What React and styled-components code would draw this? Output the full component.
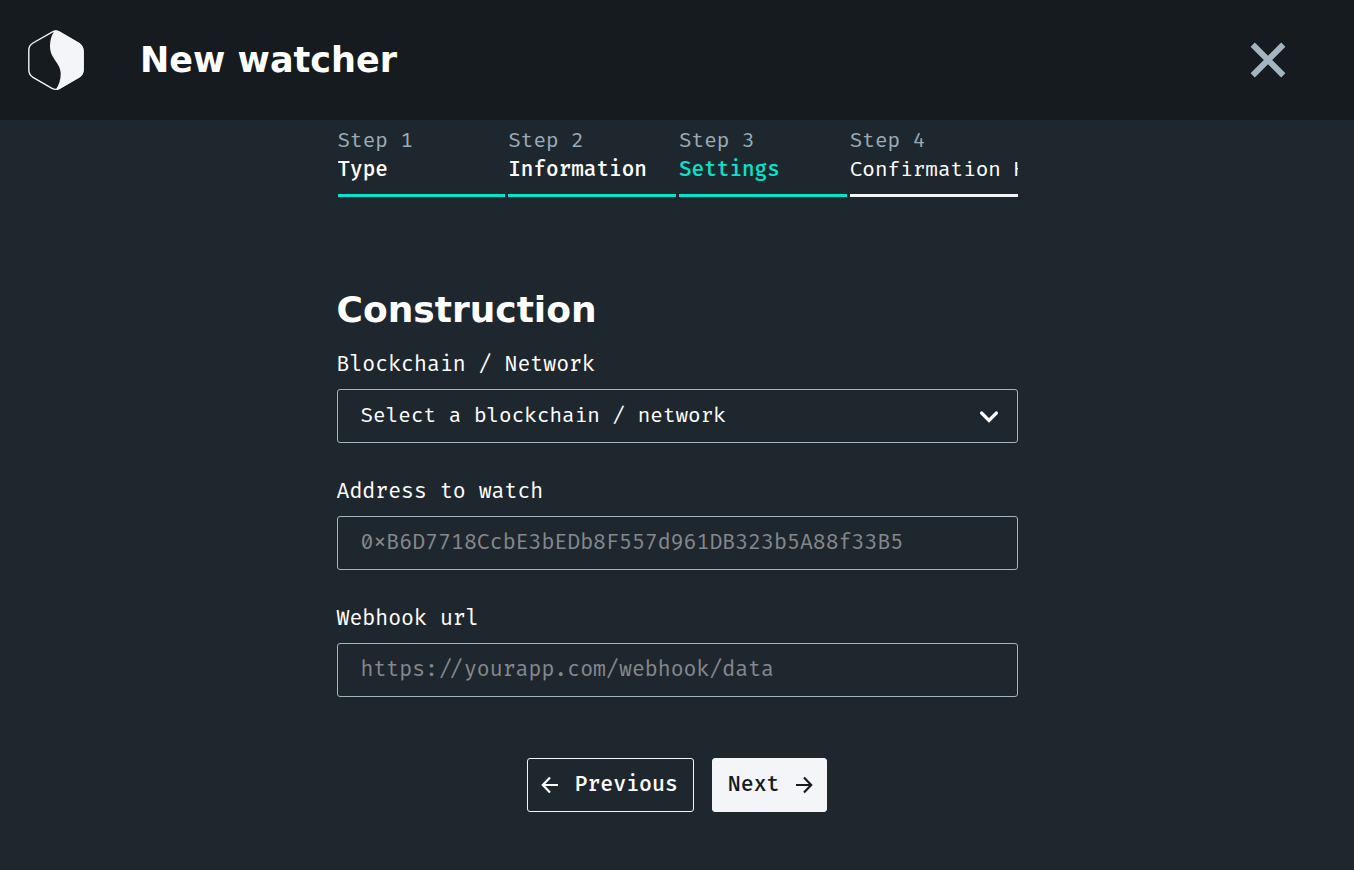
import React from "react";
import styled, { createGlobalStyle } from "styled-components";

const code = `"Fira Code", "Fira Mono", "Liberation Mono", monospace`;
const mono = `"Fira Mono", "Liberation Mono", monospace`;
const display = `"DejaVu Sans", sans-serif`;

const GlobalStyle = createGlobalStyle`
  *, *::before, *::after { box-sizing: border-box; }
  body {
    margin: 0;
    min-height: 100vh;
    background: #1f272e;
    color: #ffffff;
    font-family: ${code};
    font-size: 21px;
    line-height: 29px;
  }
`;

const Header = styled.header`
  display: flex;
  align-items: center;
  height: 120px;
  padding: 0 64px 0 24px;
  background: #151b1e;
`;

const Logo = styled.a`
  display: flex;
  margin-right: 52px;
`;

const Title = styled.h1`
  flex: 1;
  margin: 0;
  font-family: ${display};
  font-size: 35px;
  font-weight: 700;
  line-height: 44px;
`;

const CloseButton = styled.button`
  display: flex;
  padding: 0;
  border: 0;
  background: none;
  color: #a3b5c0;
  cursor: pointer;
`;

const Main = styled.main`
  width: 100%;
  max-width: 681px;
  margin: 0 auto;
  padding-bottom: 56px;
`;

const Steps = styled.ol`
  display: grid;
  grid-template-columns: repeat(4, minmax(0, 1fr));
  gap: 3px;
  margin: 0;
  padding: 6px 0 0 1px;
  list-style: none;
  font-family: ${mono};
`;

const Step = styled.li`
  overflow: hidden;
  padding-bottom: 10px;
  border-bottom: 3px solid ${(p) => (p.$reached ? "#00e5cc" : "#f4f5f8")};
  white-space: nowrap;
`;

const StepNumber = styled.div`
  color: #9aabb8;
`;

const StepName = styled.div`
  color: ${(p) => (p.$current ? "#00e5cc" : "#ffffff")};
  font-weight: ${(p) => (p.$reached ? 500 : 400)};
`;

const SectionTitle = styled.h2`
  margin: 91px 0 18px;
  font-family: ${display};
  font-size: 36px;
  font-weight: 700;
  line-height: 44px;
`;

const Field = styled.div`
  display: flex;
  flex-direction: column;
  gap: 10px;
  margin-bottom: 34px;
`;

const Label = styled.label`
  line-height: 29px;
`;

const SelectWrap = styled.div`
  display: grid;
  align-items: center;

  & > * {
    grid-area: 1 / 1;
  }

  svg {
    justify-self: end;
    margin-right: 19px;
    pointer-events: none;
  }
`;

const controlStyle = `
  width: 100%;
  height: 54px;
  padding: 0 23px 2px;
  border: 1px solid #a3b5c0;
  border-radius: 3px;
  background: transparent;
  color: #ffffff;
  font: inherit;
`;

const Select = styled.select`
  ${controlStyle}
  font-family: ${mono};
  appearance: none;
`;

const Input = styled.input`
  ${controlStyle}
  &::placeholder {
    color: #85888d;
    opacity: 1;
  }
`;

const Actions = styled.div`
  display: flex;
  justify-content: center;
  gap: 18px;
  margin-top: 61px;
`;

const Button = styled.button`
  display: flex;
  align-items: center;
  gap: 14px;
  height: 54px;
  padding: ${(p) => (p.$primary ? "0 12px 2px 15px" : "0 15px 2px 12px")};
  border: 1px solid #f4f5f8;
  border-radius: 3px;
  background: ${(p) => (p.$primary ? "#f4f5f8" : "transparent")};
  color: ${(p) => (p.$primary ? "#151b1e" : "#ffffff")};
  font: inherit;
  font-weight: 500;
  cursor: pointer;
`;

const steps = ["Type", "Information", "Settings", "Confirmation H"];
const current = 2;

function LogoMark() {
  return (
    <svg width="64" height="64" viewBox="0 0 64 64" aria-hidden="true">
      <path
        d="M28.5 3.9 Q31.7 2 35 3.9 L55 15.5 Q59.2 18.3 59.2 23.5 V42 Q59.2 46.5 55 49 L35.5 60.3 Q31.7 62.4 28 60.3 L9 49.3 Q4.8 46.7 4.8 42 V22 Q4.8 17.5 9 15 Z"
        fill="none"
        stroke="#f4f5f8"
        strokeWidth="1.4"
      />
      <path
        d="M31 2.4 Q33.5 2.2 36 3.8 L55.5 15 Q59.4 18 59.4 23 V42 Q59.4 46.5 55.5 49.5 L36 60.8 Q34 62 31.7 62 C35 57 37 51 36.7 45 C36 34 26 31 26 18 C26 12 27.5 6.5 31 2.4 Z"
        fill="#f4f5f8"
      />
    </svg>
  );
}

function Arrow({ left }) {
  return (
    <svg width="20" height="20" viewBox="0 0 20 20" fill="none" stroke="currentColor" strokeWidth="2.2" aria-hidden="true">
      <path d={left ? "M18 11 H3 M10 3.5 L2.8 11 L10 18.5" : "M2 11 H17 M10 3.5 L17.2 11 L10 18.5"} />
    </svg>
  );
}

export default function App() {
  return (
    <>
      <GlobalStyle />
      <Header>
        <Logo href="#" aria-label="Home">
          <LogoMark />
        </Logo>
        <Title>New watcher</Title>
        <CloseButton type="button" aria-label="Close">
          <svg width="44" height="44" viewBox="0 0 44 44" stroke="currentColor" strokeWidth="6" aria-hidden="true">
            <path d="M6.7 6.7 L37.3 37.3 M37.3 6.7 L6.7 37.3" />
          </svg>
        </CloseButton>
      </Header>
      <Main>
        <Steps>
          {steps.map((name, i) => (
            <Step key={name} $reached={i <= current} aria-current={i === current ? "step" : undefined}>
              <StepNumber>Step {i + 1}</StepNumber>
              <StepName $reached={i <= current} $current={i === current}>
                {name}
              </StepName>
            </Step>
          ))}
        </Steps>
        <form onSubmit={(e) => e.preventDefault()}>
          <SectionTitle>Construction</SectionTitle>
          <Field>
            <Label htmlFor="network">Blockchain / Network</Label>
            <SelectWrap>
              <Select id="network">
                <option>Select a blockchain / network</option>
              </Select>
              <svg width="20" height="14" viewBox="0 0 20 14" fill="none" stroke="#ffffff" strokeWidth="3.2" aria-hidden="true">
                <path d="M2.6 4 L10 11.4 L17.4 4" strokeLinecap="round" />
              </svg>
            </SelectWrap>
          </Field>
          <Field>
            <Label htmlFor="address">Address to watch</Label>
            <Input id="address" placeholder="0xB6D7718CcbE3bEDb8F557d961DB323b5A88f33B5" />
          </Field>
          <Field>
            <Label htmlFor="webhook">Webhook url</Label>
            <Input id="webhook" placeholder="https://yourapp.com/webhook/data" />
          </Field>
          <Actions>
            <Button type="button">
              <Arrow left />
              Previous
            </Button>
            <Button type="submit" $primary>
              Next
              <Arrow />
            </Button>
          </Actions>
        </form>
      </Main>
    </>
  );
}
